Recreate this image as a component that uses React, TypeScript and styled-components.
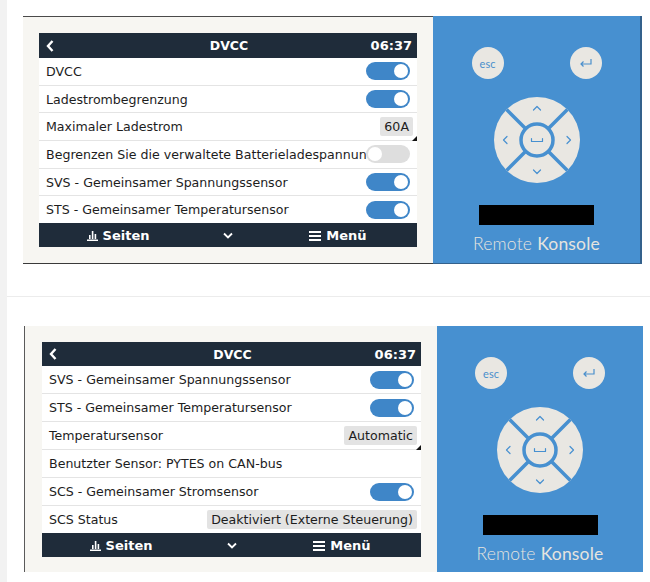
import styled, { createGlobalStyle } from "styled-components";

const BLUE = "#4790d0";
const NAVY = "#1f2c3a";
const KEY = "#e9e7e2";

const GlobalStyle = createGlobalStyle`
  body {
    margin: 0;
    background: #fff;
    font-family: "DejaVu Sans", "Liberation Sans", sans-serif;
  }
`;

type Item =
  | { label: string; kind: "toggle"; on: boolean }
  | { label: string; kind: "select"; value: string }
  | { label: string; kind: "info"; value: string }
  | { label: string; kind: "text" };

// the device cuts this label at the switch, so keep it as it shows
const firstItems: Item[] = [
  { label: "DVCC", kind: "toggle", on: true },
  { label: "Ladestrombegrenzung", kind: "toggle", on: true },
  { label: "Maximaler Ladestrom", kind: "select", value: "60A" },
  { label: "Begrenzen Sie die verwaltete Batterieladespannun", kind: "toggle", on: false },
  { label: "SVS - Gemeinsamer Spannungssensor", kind: "toggle", on: true },
  { label: "STS - Gemeinsamer Temperatursensor", kind: "toggle", on: true },
];

const secondItems: Item[] = [
  { label: "SVS - Gemeinsamer Spannungssensor", kind: "toggle", on: true },
  { label: "STS - Gemeinsamer Temperatursensor", kind: "toggle", on: true },
  { label: "Temperatursensor", kind: "select", value: "Automatic" },
  { label: "Benutzter Sensor: PYTES on CAN-bus", kind: "text" },
  { label: "SCS - Gemeinsamer Stromsensor", kind: "toggle", on: true },
  { label: "SCS Status", kind: "info", value: "Deaktiviert (Externe Steuerung)" },
];

const Page = styled.div`
  display: flex;
  width: 650px;
  height: 582px;
  overflow: hidden;
`;

const Gutter = styled.div`
  width: 7px;
  flex-shrink: 0;
  background: #f2f2f2;
`;

const Content = styled.div`
  flex: 1;
  display: flex;
  flex-direction: column;
`;

const Section = styled.section<{ $top: number; $left: number }>`
  padding: ${(p) => p.$top}px 0 0 ${(p) => p.$left}px;
`;

const Divider = styled.hr`
  margin: 32px 0 0;
  border: none;
  border-top: 1px solid #ececec;
`;

const Panel = styled.div<{ $h: number }>`
  display: flex;
  height: ${(p) => p.$h}px;
`;

const ScreenSide = styled.div<{ $w: number; $pad: string; $framed: boolean }>`
  width: ${(p) => p.$w}px;
  flex-shrink: 0;
  box-sizing: border-box;
  padding: ${(p) => p.$pad};
  background: #f7f6f2;
  display: flex;
  ${(p) =>
    p.$framed
      ? "border-top: 1px solid #4a4a4a; border-bottom: 1px solid #3a3a3a;"
      : "border-left: 1px solid #5a5a5a;"}
`;

const Screen = styled.div`
  flex: 1;
  min-width: 0;
  display: flex;
  flex-direction: column;
  background: #fff;
  font-size: 12.6px;
  color: #1d1d1d;
`;

const Bar = styled.div<{ $h: number }>`
  height: ${(p) => p.$h}px;
  flex-shrink: 0;
  background: ${NAVY};
  color: #fff;
  font-weight: bold;
  font-size: 12.5px;
  display: grid;
  align-items: center;
`;

const Header = styled(Bar)`
  grid-template-columns: 1fr auto 1fr;
  padding: 0 5px 0 7px;
`;

const Clock = styled.span`
  justify-self: end;
  font-size: 13px;
`;

const Footer = styled(Bar)`
  grid-template-columns: 158px 1fr 158px;
  justify-items: center;
  font-size: 13px;
`;

const FooterItem = styled.span`
  display: flex;
  align-items: center;
  gap: 5px;
`;

const Rows = styled.div`
  flex: 1;
  display: flex;
  flex-direction: column;
`;

const Row = styled.div`
  flex: 1;
  min-width: 0;
  display: flex;
  align-items: center;
  padding: 0 7px 0 7px;
  border-bottom: 1px solid #e4e4e4;
  &:last-child {
    border-bottom: none;
  }
`;

const Label = styled.span`
  flex: 1;
  min-width: 0;
  white-space: nowrap;
`;

const Toggle = styled.span<{ $on: boolean }>`
  position: relative;
  width: 44px;
  height: 18px;
  flex-shrink: 0;
  border-radius: 9px;
  background: ${(p) => (p.$on ? "#3f86c8" : "#dedede")};
  &::after {
    content: "";
    position: absolute;
    top: 2px;
    ${(p) => (p.$on ? "right: 2px;" : "left: 2px;")}
    width: 14px;
    height: 14px;
    border-radius: 50%;
    background: #fff;
  }
`;

const ValueBox = styled.span<{ $select: boolean }>`
  position: relative;
  flex-shrink: 0;
  background: #e3e3e3;
  border-radius: 2px;
  padding: 2px 4px;
  margin-right: -3px;
  ${(p) =>
    p.$select &&
    `&::after {
      content: "";
      position: absolute;
      right: -4px;
      bottom: -5px;
      border-left: 5px solid transparent;
      border-bottom: 5px solid #111;
    }`}
`;

const Remote = styled.div<{ $w: number; $framed: boolean }>`
  width: ${(p) => p.$w}px;
  flex-shrink: 0;
  box-sizing: border-box;
  background: ${BLUE};
  display: flex;
  flex-direction: column;
  align-items: center;
  padding-top: 31px;
  ${(p) => p.$framed && "border-right: 2px solid #34618c; border-bottom: 1px solid #34618c;"}
`;

const KeyRow = styled.div`
  width: 130px;
  display: flex;
  justify-content: space-between;
`;

const RoundKey = styled.span`
  width: 32px;
  height: 32px;
  border-radius: 50%;
  background: ${KEY};
  color: #4a8fcc;
  font-family: Lato, sans-serif;
  font-size: 11px;
  display: flex;
  align-items: center;
  justify-content: center;
`;

const Pad = styled.svg`
  margin-top: 18px;
`;

const Redacted = styled.div`
  margin-top: 22px;
  width: 115px;
  height: 20px;
  background: #000;
`;

const Brand = styled.div`
  margin-top: 8px;
  font-family: Lato, sans-serif;
  font-size: 17.5px;
  color: #e6e4df;
  letter-spacing: 0.2px;
  font-weight: 300;
  b {
    font-weight: 400;
  }
`;

const DPad = () => (
  <Pad width="86" height="86" viewBox="0 0 86 86">
    <circle cx="43" cy="43" r="43" fill={KEY} />
    <path d="M12.6 12.6 L73.4 73.4 M73.4 12.6 L12.6 73.4" stroke={BLUE} strokeWidth="3.5" />
    <circle cx="43" cy="43" r="16" fill={KEY} stroke={BLUE} strokeWidth="3.5" />
    <g stroke={BLUE} strokeWidth="1.2" fill="none" strokeLinecap="round" strokeLinejoin="round">
      <path d="M37.5 41.5 V44.5 H48.5 V41.5" />
      <path d="M39.5 13 L43 9.5 L46.5 13" />
      <path d="M39.5 73 L43 76.5 L46.5 73" />
      <path d="M13 39.5 L9.5 43 L13 46.5" />
      <path d="M73 39.5 L76.5 43 L73 46.5" />
    </g>
  </Pad>
);

const ReturnIcon = () => (
  <svg width="14" height="12" viewBox="0 0 14 12">
    <path d="M12 2 V7 H2 M4.5 4.5 L2 7 L4.5 9.5" stroke="#4a8fcc" strokeWidth="1.2" fill="none" />
  </svg>
);

const BackIcon = () => (
  <svg width="8" height="12" viewBox="0 0 8 12">
    <path d="M6.5 1 L2 6 L6.5 11" stroke="#fff" strokeWidth="2.4" fill="none" />
  </svg>
);

const PagesIcon = () => (
  <svg width="11" height="11" viewBox="0 0 11 11">
    <rect x="0" y="9.5" width="11" height="1.5" fill="#fff" />
    <rect x="2" y="5" width="1.6" height="4" fill="#fff" />
    <rect x="4.8" y="1" width="1.6" height="8" fill="#fff" />
    <rect x="7.6" y="4" width="1.6" height="5" fill="#fff" />
  </svg>
);

const MenuIcon = () => (
  <svg width="12" height="11" viewBox="0 0 12 11">
    <rect x="0" y="1" width="12" height="2" fill="#fff" />
    <rect x="0" y="5" width="12" height="2" fill="#fff" />
    <rect x="0" y="9" width="12" height="2" fill="#fff" />
  </svg>
);

const DownIcon = () => (
  <svg width="10" height="7" viewBox="0 0 10 7">
    <path d="M1 1.5 L5 5.5 L9 1.5" stroke="#fff" strokeWidth="1.8" fill="none" />
  </svg>
);

const Control = ({ item }: { item: Item }) => {
  if (item.kind === "toggle") return <Toggle $on={item.on} />;
  if (item.kind === "select") return <ValueBox $select>{item.value}</ValueBox>;
  if (item.kind === "info") return <ValueBox $select={false}>{item.value}</ValueBox>;
  return null;
};

type ConsoleProps = {
  items: Item[];
  height: number;
  screenW: number;
  remoteW: number;
  pad: string;
  headerH: number;
  framed: boolean;
};

const RemoteConsole = ({ items, height, screenW, remoteW, pad, headerH, framed }: ConsoleProps) => (
  <Panel $h={height}>
    <ScreenSide $w={screenW} $pad={pad} $framed={framed}>
      <Screen>
        <Header $h={headerH}>
          <BackIcon />
          <span>DVCC</span>
          <Clock>06:37</Clock>
        </Header>
        <Rows>
          {items.map((item, i) => (
            <Row key={i}>
              <Label>{item.label}</Label>
              <Control item={item} />
            </Row>
          ))}
        </Rows>
        <Footer $h={24}>
          <FooterItem>
            <PagesIcon />
            Seiten
          </FooterItem>
          <FooterItem>
            <DownIcon />
          </FooterItem>
          <FooterItem>
            <MenuIcon />
            Menü
          </FooterItem>
        </Footer>
      </Screen>
    </ScreenSide>
    <Remote $w={remoteW} $framed={framed}>
      <KeyRow>
        <RoundKey>esc</RoundKey>
        <RoundKey>
          <ReturnIcon />
        </RoundKey>
      </KeyRow>
      <DPad />
      <Redacted />
      <Brand>
        Remote <b>Konsole</b>
      </Brand>
    </Remote>
  </Panel>
);

export default function App() {
  return (
    <>
      <GlobalStyle />
      <Page>
        <Gutter />
        <Content>
          <Section $top={16} $left={16}>
            <RemoteConsole
              items={firstItems}
              height={248}
              screenW={410}
              remoteW={209}
              pad="16px 16px 16px 16px"
              headerH={25}
              framed
            />
          </Section>
          <Divider />
          <Section $top={29} $left={17}>
            <RemoteConsole
              items={secondItems}
              height={246}
              screenW={413}
              remoteW={206}
              pad="16px 16px 15px 17px"
              headerH={24}
              framed={false}
            />
          </Section>
        </Content>
      </Page>
    </>
  );
}
